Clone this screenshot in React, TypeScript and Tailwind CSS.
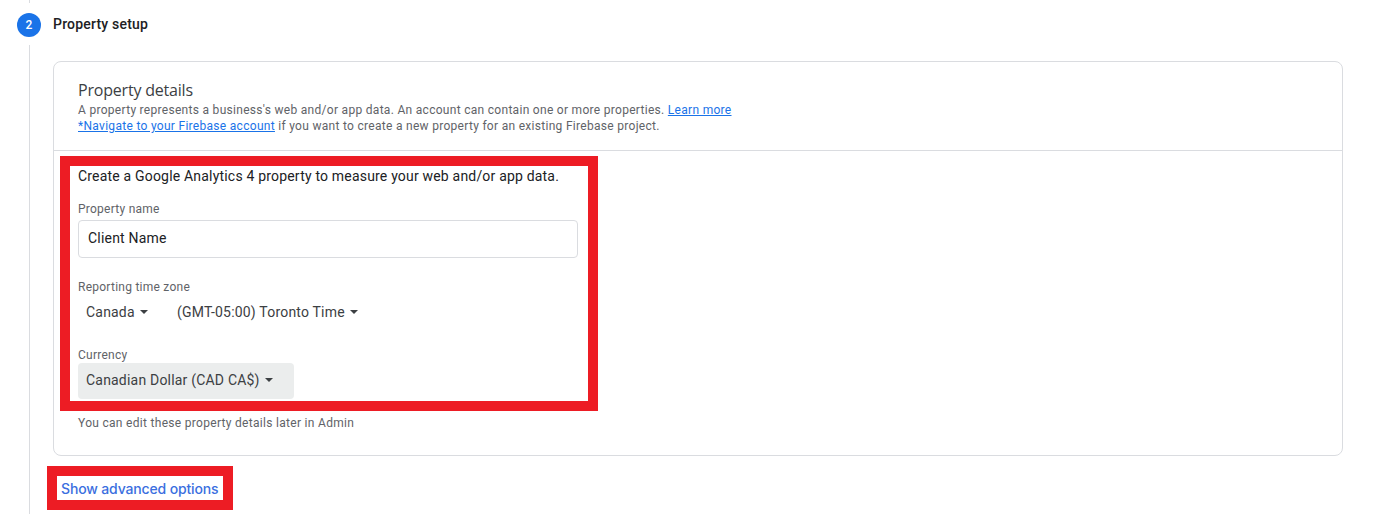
function Caret() {
  return (
    <svg viewBox="0 0 8 4" className="w-2 h-1 fill-[#3c4043]">
      <path d="M0 0l4 4 4-4z" />
    </svg>
  );
}

export default function App() {
  return (
    <div className="relative w-[1382px] h-[514px] overflow-hidden bg-white font-['Roboto',sans-serif] text-[#202124]">
      <div className="ml-[29px] w-px h-[3px] bg-[#dadce0]"></div>

      {/* step header */}
      <div className="flex items-center gap-3 ml-[17px] mt-[10px] h-6">
        <div className="flex items-center justify-center w-6 h-6 rounded-full bg-[#1a73e8] text-white text-xs font-medium">2</div>
        <span className="pb-[2px] text-sm font-medium tracking-[0.2px]">Property setup</span>
      </div>

      <div className="ml-[29px] mt-2 pl-[23px] pt-4 h-[469px] border-l border-[#dadce0]">
        <div className="w-[1290px] h-[395px] rounded-lg border border-[#dadce0]">
          <div className="h-[89px] pl-6 pt-4 border-b border-[#dadce0]">
            <h2 className="text-base leading-6 tracking-[-0.2px] text-[#3c4043] font-['Open_Sans',sans-serif]">Property details</h2>
            <p className="text-xs leading-4 tracking-[0.295px] text-[#5f6368]">
              A property represents a business's web and/or app data. An account can contain one or more properties.{" "}
              <a className="text-[#1a73e8] underline">Learn more</a>
            </p>
            <p className="text-xs leading-4 tracking-[0.295px] text-[#5f6368]">
              <a className="text-[#1a73e8] underline">*Navigate to your Firebase account</a> if you want to create a new property for an existing Firebase project.
            </p>
          </div>

          <div className="pl-6 pt-[15px]">
            <p className="text-sm leading-5 tracking-[0.19px]">Create a Google Analytics 4 property to measure your web and/or app data.</p>

            <label className="block mt-[15px] text-xs leading-4 tracking-[0.25px] text-[#5f6368]">Property name</label>
            <div className="flex items-center w-[500px] h-[38px] mt-[3px] px-[9px] pb-[2px] rounded border border-[#dadce0] text-sm tracking-[0.2px]">Client Name</div>

            <label className="block mt-[21px] text-xs leading-4 tracking-[0.25px] text-[#5f6368]">Reporting time zone</label>
            <div className="flex items-center h-[34px] text-sm tracking-[0.2px] text-[#3c4043]">
              <div className="flex items-center gap-[5px] pl-2 w-[99px]">
                <span>Canada</span>
                <Caret />
              </div>
              <div className="flex items-center gap-[5px]">
                <span>(GMT-05:00) Toronto Time</span>
                <Caret />
              </div>
            </div>

            <label className="block mt-[18px] text-xs leading-4 tracking-[0.25px] text-[#5f6368]">Currency</label>
            <div className="flex items-center gap-[5px] w-[216px] h-9 pl-2 pb-[2px] rounded bg-[#ebeded] text-sm tracking-[0.2px] text-[#3c4043]">
              <span>Canadian Dollar (CAD CA$)</span>
              <Caret />
            </div>

            <p className="mt-4 text-xs leading-4 tracking-[0.3px] text-[#5f6368]">You can edit these property details later in Admin</p>
          </div>
        </div>

        <div className="ml-2 mt-[23px] text-sm leading-5 font-medium tracking-[-0.15px] text-[#3b6fe0] font-['Inter',sans-serif]">Show advanced options</div>
      </div>

      {/* red annotation boxes */}
      <div className="absolute left-[60px] top-[156px] w-[538px] h-[255px] border-[10px] border-[#ed1c24]"></div>
      <div className="absolute left-[47px] top-[466px] w-[186px] h-[44px] border-[10px] border-[#ed1c24]"></div>
    </div>
  );
}
